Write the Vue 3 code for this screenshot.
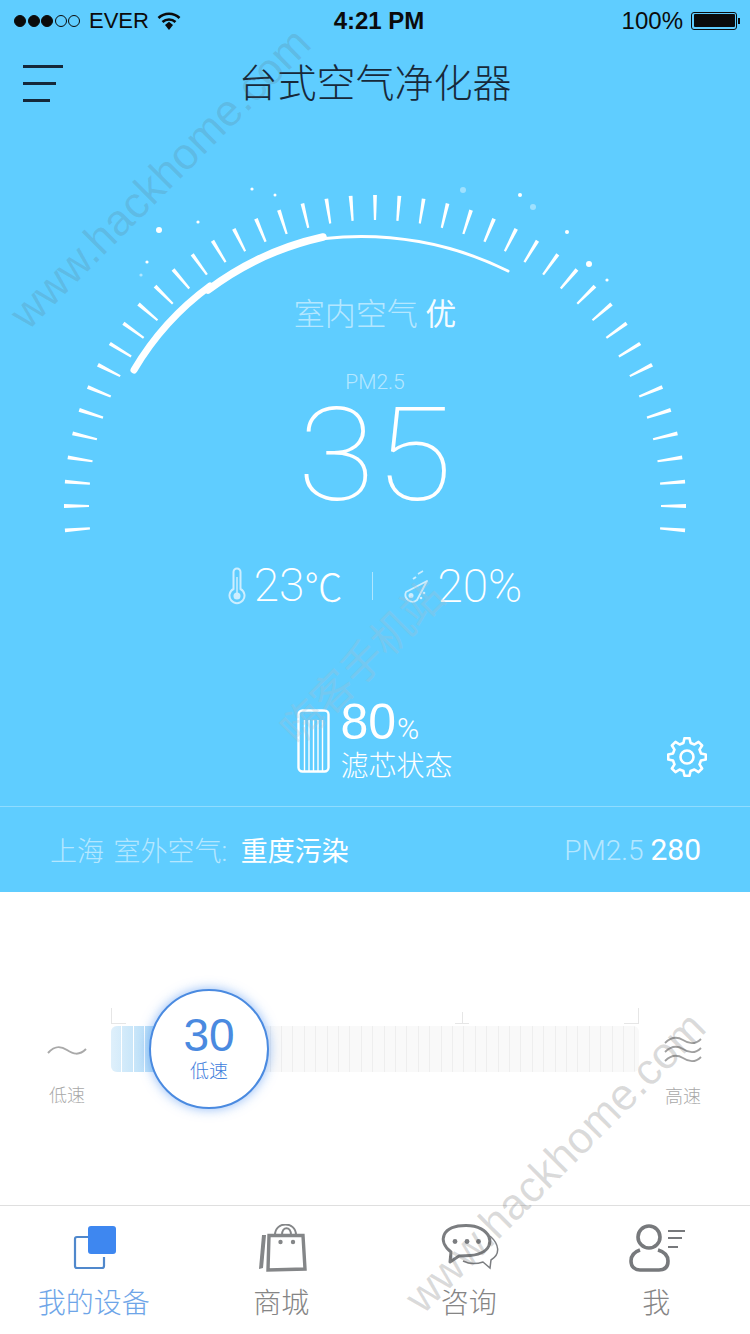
<script setup>
const cx = 375
const cy = 506

function polar(r, deg) {
  const a = (deg * Math.PI) / 180
  return [cx - r * Math.cos(a), cy - r * Math.sin(a)]
}

// ticks run from just below the left horizon to just below the right one
const ticks = []
for (let i = 0; i < 43; i++) {
  const deg = -4.5 + i * 4.5
  const a = (deg * Math.PI) / 180
  const nx = Math.sin(a)
  const ny = -Math.cos(a)
  const [ox, oy] = polar(311, deg)
  const [ix, iy] = polar(286, deg)
  const w = 1.9
  const v = 1.1
  ticks.push(
    [
      [ox + nx * w, oy + ny * w],
      [ox - nx * w, oy - ny * w],
      [ix - nx * v, iy - ny * v],
      [ix + nx * v, iy + ny * v]
    ]
      .map((p) => p.map((n) => n.toFixed(1)).join(','))
      .join(' ')
  )
}

const dots = [
  { x: 159, y: 230, r: 3, o: 1 },
  { x: 198, y: 222, r: 1.6, o: 1 },
  { x: 147, y: 262, r: 1.6, o: 1 },
  { x: 141, y: 275, r: 1.6, o: 0.5 },
  { x: 252, y: 189, r: 1.6, o: 1 },
  { x: 275, y: 195, r: 1.5, o: 1 },
  { x: 463, y: 190, r: 3, o: 0.4 },
  { x: 520, y: 195, r: 2, o: 1 },
  { x: 533, y: 207, r: 3, o: 0.4 },
  { x: 567, y: 232, r: 2, o: 1 },
  { x: 589, y: 264, r: 3, o: 1 },
  { x: 607, y: 280, r: 1.6, o: 1 }
]

function gearPath(x, y, outer, inner, teeth) {
  const step = (Math.PI * 2) / teeth
  let d = ''
  for (let i = 0; i < teeth; i++) {
    const a = i * step - Math.PI / 2
    const pts = [
      [inner, a - step * 0.32],
      [outer, a - step * 0.17],
      [outer, a + step * 0.17],
      [inner, a + step * 0.32]
    ]
    pts.forEach(([r, t], k) => {
      const px = (x + r * Math.cos(t)).toFixed(1)
      const py = (y + r * Math.sin(t)).toFixed(1)
      d += (i === 0 && k === 0 ? 'M' : 'L') + px + ' ' + py + ' '
    })
  }
  return d + 'Z'
}

const gear = gearPath(20, 20, 19, 14.5, 8)

const tabs = [
  { key: 'device', label: '我的设备', active: true },
  { key: 'shop', label: '商城' },
  { key: 'chat', label: '咨询' },
  { key: 'me', label: '我' }
]
</script>

<template>
  <div class="page">
    <section class="hero">
      <svg class="gauge" width="750" height="600" viewBox="0 0 750 600">
        <polygon v-for="(t, i) in ticks" :key="i" :points="t" fill="#fff" />
        <circle v-for="(d, i) in dots" :key="'d' + i" :cx="d.x" :cy="d.y" :r="d.r" fill="#fff" :opacity="d.o" />
        <path d="M325 238.500 A330 330 0 0 1 508 271" fill="none" stroke="#fff" stroke-width="3" stroke-linecap="round" />
        <path d="M134 370 A280 280 0 0 1 210 286" fill="none" stroke="#fff" stroke-width="7" stroke-linecap="round" />
        <path d="M208 290 A300 300 0 0 1 323 237" fill="none" stroke="#fff" stroke-width="7.500" stroke-linecap="round" />
      </svg>

      <div class="status">
        <div class="status-left">
          <span class="signal">
            <i class="on"></i><i class="on"></i><i class="on"></i><i></i><i></i>
          </span>
          <span class="carrier">EVER</span>
          <svg width="24" height="20" viewBox="0 0 24 20">
            <path d="M1.500 7 A15 15 0 0 1 22.500 7" fill="none" stroke="#0b0b0b" stroke-width="2.600" />
            <path d="M5.500 11 A9.500 9.500 0 0 1 18.500 11" fill="none" stroke="#0b0b0b" stroke-width="2.600" />
            <path d="M8 14 L12 10.800 L16 14 L12 19 Z" fill="#0b0b0b" />
          </svg>
        </div>
        <div class="status-time">4:21 PM</div>
        <div class="status-right">
          <span>100%</span>
          <span class="battery"><i></i></span>
        </div>
      </div>

      <div class="nav">
        <div class="menu"><i></i><i></i><i></i></div>
        <h1>台式空气净化器</h1>
        <div></div>
      </div>

      <div class="air">室内空气 <b>优</b></div>
      <div class="pm-label">PM2.5</div>
      <div class="pm-value">35</div>

      <div class="stats">
        <svg width="18" height="38" viewBox="0 0 18 38" class="stat-icon">
          <path d="M5.500 22 V5 a3.500 3.500 0 0 1 7 0 V22 a7.500 7.500 0 1 1 -7 0 Z" fill="none" stroke="#cdeeff" stroke-width="2" />
          <line x1="9" y1="10" x2="9" y2="26" stroke="#cdeeff" stroke-width="1.500" />
          <circle cx="9" cy="29" r="3.500" fill="#cdeeff" />
        </svg>
        <span class="stat-num">23<small>℃</small></span>
        <span class="stat-sep"></span>
        <svg width="28" height="36" viewBox="0 0 28 36" class="stat-icon stat-drop">
          <path d="M24 13 L14 32 a7 7 0 0 1 -11 -8 Z" fill="none" stroke="#cdeeff" stroke-width="1.800" stroke-linejoin="round" />
          <circle cx="8" cy="27.500" r="2.500" fill="#cdeeff" />
          <line x1="15" y1="6" x2="20" y2="3" stroke="#cdeeff" stroke-width="1.500" />
          <line x1="10" y1="11" x2="13" y2="9" stroke="#cdeeff" stroke-width="2" />
          <circle cx="21" cy="25" r="1.300" fill="#cdeeff" />
          <circle cx="18" cy="30" r="1.300" fill="#cdeeff" />
        </svg>
        <span class="stat-num">20%</span>
      </div>

      <div class="filter-row">
        <div></div>
        <div class="filter">
          <svg width="33" height="64" viewBox="0 0 33 64">
            <rect x="1.500" y="1.500" width="30" height="61" rx="4" fill="none" stroke="#fff" stroke-width="2.400" />
            <path d="M7.500 11 V62 M12 11 V62 M16.500 11 V62 M21 11 V62 M25.500 11 V62" stroke="#fff" stroke-width="1.400" />
          </svg>
          <div class="filter-text">
            <div class="filter-num">80<small>%</small></div>
            <div class="filter-label">滤芯状态</div>
          </div>
        </div>
        <div class="gear">
          <svg width="40" height="40" viewBox="0 0 40 40">
            <path :d="gear" fill="none" stroke="#fff" stroke-width="2.600" stroke-linejoin="round" />
            <circle cx="20" cy="20" r="6.500" fill="none" stroke="#fff" stroke-width="2.600" />
          </svg>
        </div>
      </div>

      <div class="outdoor">
        <div class="outdoor-city">上海 室外空气: <b>重度污染</b></div>
        <div class="outdoor-pm">PM2.5 <b>280</b></div>
      </div>
    </section>

    <section class="speed">
      <div class="speed-end low">
        <svg width="40" height="14" viewBox="0 0 40 14">
          <path d="M1 9 C8 1 14 2 20 6 C26 10 32 12 39 5" fill="none" stroke="#a9a9a9" stroke-width="2" />
        </svg>
        <span>低速</span>
      </div>

      <div class="track-wrap">
        <div class="marks">
          <i class="mark-l"></i>
          <i class="mark-m"></i>
          <i class="mark-r"></i>
        </div>
        <div class="track">
          <div class="track-fill"></div>
        </div>
        <div class="knob">
          <div class="knob-num">30</div>
          <div class="knob-label">低速</div>
        </div>
      </div>

      <div class="speed-end high">
        <svg width="38" height="28" viewBox="0 0 38 28">
          <path d="M1 7 C8 0 14 1 19 4 C25 8 31 9 37 3" fill="none" stroke="#a0a0a0" stroke-width="1.800" />
          <path d="M1 16 C8 9 14 10 19 13 C25 17 31 18 37 12" fill="none" stroke="#a0a0a0" stroke-width="1.800" />
          <path d="M1 25 C8 18 14 19 19 22 C25 26 31 27 37 21" fill="none" stroke="#a0a0a0" stroke-width="1.800" />
        </svg>
        <span>高速</span>
      </div>
    </section>

    <nav class="tabs">
      <div v-for="tab in tabs" :key="tab.key" class="tab" :class="{ active: tab.active }">
        <svg width="60" height="54" viewBox="0 0 60 54">
          <template v-if="tab.key === 'device'">
            <path d="M24 13 H13 a2 2 0 0 0 -2 2 V42 a2 2 0 0 0 2 2 H38 a2 2 0 0 0 2 -2 V33" fill="none" stroke="#5088cc" stroke-width="2.200" />
            <rect x="24" y="2" width="28" height="28" rx="3" fill="#3e87f0" />
          </template>
          <template v-else-if="tab.key === 'shop'">
            <path d="M18 11.500 H52 L54 45 L17 46 Z" fill="none" stroke="#848688" stroke-width="3.400" />
            <path d="M11 11 L15 11 L12 44 L8 45 Z" fill="#848688" />
            <path d="M24 11 C24 -3 45 -3 45 11 M31 11 C31 2 40 2 40 11" fill="none" stroke="#848688" stroke-width="2" />
            <circle cx="29.500" cy="18" r="2.200" fill="#848688" />
            <circle cx="42" cy="18" r="2.200" fill="#848688" />
          </template>
          <template v-else-if="tab.key === 'chat'">
            <path d="M51 12 C60 20 62 30 52 36 L51 44 L44 38 C38 40 30 40 24 37" fill="none" stroke="#7b7d80" stroke-width="1.500" />
            <path d="M12 28 C-2 17 3 1.500 27 1.500 C52 1.500 58 22 42 29 C34 33 25 31 20 32 L11 38 Z" fill="none" stroke="#7b7d80" stroke-width="3" stroke-linejoin="round" />
            <circle cx="16" cy="17.500" r="2.400" fill="#7b7d80" />
            <circle cx="28" cy="17.500" r="2.400" fill="#7b7d80" />
            <circle cx="39.500" cy="17.500" r="2.400" fill="#7b7d80" />
          </template>
          <template v-else>
            <circle cx="23" cy="13" r="11" fill="none" stroke="#77797c" stroke-width="3.600" />
            <path d="M14 26 C8 28 5 32 5 37 C5 43 9 46 14 46 H33 C39 46 42 43 42 37 C42 32 39 28 32 26" fill="none" stroke="#77797c" stroke-width="3.600" />
            <path d="M42 7 H59 M42 14 H56 M42 23 H52" stroke="#77797c" stroke-width="1.800" />
          </template>
        </svg>
        <span>{{ tab.label }}</span>
      </div>
    </nav>

    <span class="mark mark-top">www.hackhome.com</span>
    <span class="mark mark-mid">嗨客手机站</span>
    <span class="mark mark-bottom">www.hackhome.com</span>
  </div>
</template>

<style scoped>
.page {
  position: relative;
  width: 750px;
  height: 1334px;
  overflow: hidden;
  background: #fff;
  font-family: "Roboto", "Liberation Sans", "Noto Sans CJK SC", sans-serif;
  display: flex;
  flex-direction: column;
}

.hero {
  position: relative;
  height: 892px;
  background: #5fcdff;
  color: #fff;
  display: flex;
  flex-direction: column;
  flex: none;
}

.gauge {
  position: absolute;
  top: 0;
  left: 0;
}

.status {
  height: 41px;
  display: grid;
  grid-template-columns: 1fr auto 1fr;
  align-items: center;
  padding: 0 10px 0 14px;
  color: #0b0b0b;
  font-family: "Liberation Sans", sans-serif;
  font-size: 24px;
  position: relative;
}

.status-left {
  display: flex;
  align-items: center;
  gap: 8px;
}

.carrier {
  font-size: 22px;
  margin-left: 1px;
}

.signal {
  display: flex;
  gap: 1.500px;
}

.signal i {
  width: 12px;
  height: 12px;
  border: 1px solid #0b0b0b;
  border-radius: 50%;
  box-sizing: border-box;
}

.signal i.on {
  background: #0b0b0b;
}

.status-time {
  font-weight: 700;
  font-size: 24px;
  transform: translateX(2px);
}

.status-right {
  display: flex;
  justify-content: flex-end;
  align-items: center;
  gap: 8px;
  padding-right: 3px;
}

.battery {
  position: relative;
  display: block;
  width: 46px;
  height: 18px;
  border: 1px solid #0b0b0b;
  border-radius: 3px;
  padding: 1.500px;
  box-sizing: border-box;
}

.battery i {
  display: block;
  height: 100%;
  background: #0b0b0b;
  border-radius: 1px;
}

.battery::after {
  content: "";
  position: absolute;
  right: -4px;
  top: 5px;
  width: 2px;
  height: 6px;
  background: #0b0b0b;
}

.nav {
  height: 83px;
  box-sizing: border-box;
  display: grid;
  grid-template-columns: 1fr auto 1fr;
  align-items: center;
  padding: 2px 23px 0;
  position: relative;
}

.nav h1 {
  margin: 0;
  font-size: 39px;
  font-weight: 300;
  color: #17293a;
  letter-spacing: 0;
  line-height: 50px;
}

.menu {
  display: flex;
  flex-direction: column;
  gap: 14px;
}

.menu i {
  display: block;
  height: 3px;
  width: 40px;
  background: #15283a;
}

.menu i:nth-child(2) {
  width: 33px;
}

.menu i:nth-child(3) {
  width: 27px;
}

.air {
  margin-top: 171px;
  height: 40px;
  line-height: 40px;
  text-align: center;
  font-size: 31px;
  font-weight: 300;
  color: rgba(255, 255, 255, 0.55);
  position: relative;
}

.air b {
  color: rgba(255, 255, 255, 0.95);
  font-weight: 400;
}

.pm-label {
  margin-top: 35px;
  height: 24px;
  line-height: 24px;
  text-align: center;
  font-size: 21px;
  font-weight: 300;
  color: rgba(255, 255, 255, 0.55);
  position: relative;
}

.pm-value {
  height: 120px;
  line-height: 124px;
  text-align: center;
  font-size: 130px;
  font-weight: 100;
  transform: scaleX(1.09);
  position: relative;
}

.stats {
  margin-top: 47px;
  height: 50px;
  display: flex;
  align-items: center;
  justify-content: center;
  position: relative;
}

.stat-icon {
  margin-right: 8px;
}

.stat-drop {
  margin-right: 6px;
}

.stat-num {
  font-size: 46px;
  font-weight: 200;
  line-height: 50px;
}

.stat-num small {
  font-size: 38px;
}

.stat-sep {
  width: 1px;
  height: 28px;
  background: rgba(255, 255, 255, 0.5);
  margin: 0 30px;
}

.filter-row {
  margin-top: 95px;
  height: 70px;
  display: grid;
  grid-template-columns: 1fr auto 1fr;
  grid-template-rows: 70px;
  align-items: start;
  position: relative;
}

.filter {
  display: flex;
  align-items: flex-start;
  gap: 10px;
  padding-top: 3px;
}

.filter-text {
  margin-top: -7px;
}

.filter-num {
  font-family: "Liberation Sans", sans-serif;
  font-size: 50px;
  line-height: 40px;
}

.filter-num small {
  font-family: "Roboto", sans-serif;
  font-size: 30px;
  font-weight: 300;
  margin-left: 1px;
}

.filter-label {
  font-size: 28px;
  font-weight: 300;
  line-height: 36px;
}

.gear {
  display: flex;
  justify-content: flex-end;
  padding: 31px 43px 0 0;
}

.outdoor {
  margin-top: 30px;
  height: 85px;
  box-sizing: border-box;
  border-top: 1px solid rgba(255, 255, 255, 0.3);
  display: flex;
  align-items: center;
  justify-content: space-between;
  padding: 0 49px 0 50px;
  font-weight: 300;
  font-size: 27px;
  color: rgba(255, 255, 255, 0.55);
  position: relative;
}

.outdoor b {
  color: #fff;
  font-weight: 400;
}

.outdoor-city {
  word-spacing: 3px;
}

.outdoor-city b {
  margin-left: 4px;
}

.outdoor-pm {
  font-size: 28px;
}

.outdoor-pm b {
  font-size: 30px;
}

.speed {
  height: 313px;
  flex: none;
  display: flex;
  align-items: flex-start;
  justify-content: space-between;
  padding: 116px 47px 0;
  box-sizing: border-box;
  color: #a8a8a8;
}

.speed-end {
  display: flex;
  flex-direction: column;
  align-items: center;
  width: 40px;
  font-size: 18px;
  font-weight: 300;
  line-height: 26px;
}

.speed-end.low {
  padding-top: 36px;
  gap: 25px;
}

.speed-end.high {
  padding-top: 28px;
  gap: 20px;
}

.track-wrap {
  position: relative;
  width: 528px;
  flex: none;
}

.marks {
  position: relative;
  height: 16px;
  margin-bottom: 2px;
}

.marks i {
  position: absolute;
  top: 0;
  height: 15px;
  border-bottom: 1px solid #e6e6e6;
}

.mark-l {
  left: 0;
  width: 14px;
  border-left: 1px solid #e6e6e6;
}

.mark-m {
  left: 344px;
  width: 14px;
}

.mark-m::after {
  content: "";
  position: absolute;
  left: 7px;
  top: 4px;
  height: 11px;
  border-left: 1px solid #e6e6e6;
}

.mark-r {
  right: 0;
  width: 14px;
  border-right: 1px solid #e6e6e6;
}

.track {
  position: relative;
  height: 46px;
  border-radius: 6px;
  overflow: hidden;
  background:
    repeating-linear-gradient(90deg, transparent 0, transparent 10.400px, #eeeeee 10.400px, #eeeeee 11.400px),
    #f9f9f9;
}

.track-fill {
  position: absolute;
  left: 0;
  top: 0;
  bottom: 0;
  width: 60px;
  background:
    repeating-linear-gradient(90deg, transparent 0, transparent 10.400px, #fff 10.400px, #fff 11.400px),
    linear-gradient(90deg, #dff0fb, #a4d5f6);
}

.knob {
  position: absolute;
  left: 38px;
  top: -19px;
  width: 120px;
  height: 120px;
  box-sizing: border-box;
  border: 2px solid #4a8ae0;
  border-radius: 50%;
  background: #fff;
  box-shadow: 0 0 12px rgba(70, 140, 240, 0.6);
  color: #4a8ae0;
  text-align: center;
  display: flex;
  flex-direction: column;
  align-items: center;
  justify-content: center;
  padding-bottom: 2px;
}

.knob-num {
  font-size: 46px;
  line-height: 46px;
  font-family: "Liberation Sans", sans-serif;
}

.knob-label {
  font-size: 19px;
  font-weight: 300;
  line-height: 24px;
  margin-top: 2px;
  color: #3f80dc;
}

.tabs {
  flex: 1;
  display: grid;
  grid-template-columns: repeat(4, 1fr);
  border-top: 1px solid #dfdfdf;
  background: #fff;
}

.tab {
  display: flex;
  flex-direction: column;
  align-items: center;
  padding-top: 18px;
  font-size: 28px;
  font-weight: 300;
  line-height: 40px;
  color: #858585;
}

.tab svg {
  margin-bottom: 6px;
  height: 54px;
}

.tab.active {
  color: #6ea5e8;
}

.mark {
  position: absolute;
  transform: translate(-50%, -50%) rotate(-45deg);
  white-space: nowrap;
  font-family: "Liberation Sans", "Noto Sans CJK SC", sans-serif;
  font-size: 44px;
  color: rgba(90, 90, 90, 0.22);
  pointer-events: none;
}

.mark-top {
  left: 160px;
  top: 178px;
  color: rgba(90, 90, 90, 0.16);
}

.mark-mid {
  left: 360px;
  top: 660px;
  font-size: 42px;
  color: rgba(170, 190, 205, 0.3);
}

.mark-bottom {
  left: 555px;
  top: 1162px;
}
</style>
